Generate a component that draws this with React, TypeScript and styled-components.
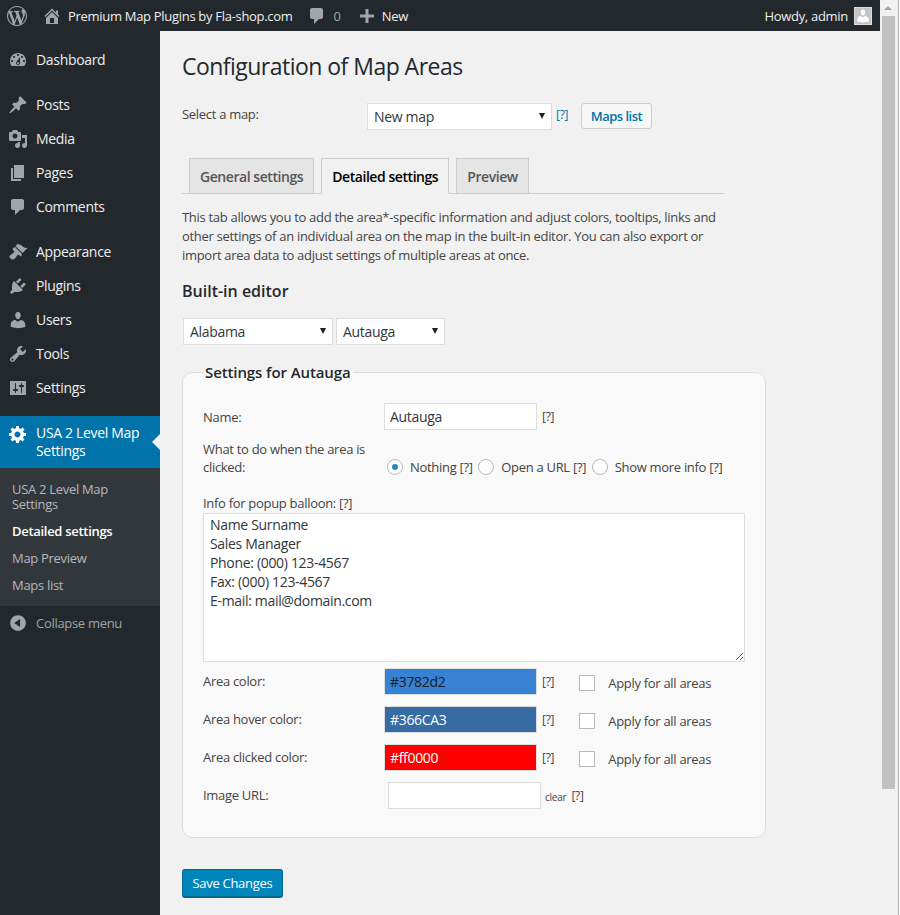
import styled, { createGlobalStyle } from 'styled-components';

const Font = '"Open Sans", "Noto Sans", sans-serif';

const Global = createGlobalStyle`
  html, body {
    margin: 0;
    height: 915px;
    overflow: hidden;
    background: #fff;
  }
  * {
    box-sizing: border-box;
    letter-spacing: -0.023em;
  }
`;

const Icons = {
  wordpress:
    'M20 10c0-5.51-4.49-10-10-10C4.48 0 0 4.49 0 10c0 5.52 4.48 10 10 10 5.51 0 10-4.48 10-10zM7.78 15.37L4.37 6.22c.55-.02 1.17-.08 1.17-.08.5-.06.44-1.13-.06-1.11 0 0-1.45.11-2.37.11-.18 0-.37 0-.58-.01C4.12 2.69 6.87 1.11 10 1.11c2.33 0 4.45.87 6.05 2.34-.68-.11-1.65.39-1.65 1.58 0 .74.45 1.36.9 2.1.35.61.55 1.36.55 2.46 0 1.49-1.4 5-1.4 5l-3.03-8.37c.54-.02.82-.17.82-.17.5-.05.44-1.25-.06-1.22 0 0-1.44.12-2.38.12-.87 0-2.33-.12-2.33-.12-.5-.03-.56 1.2-.06 1.22l.92.08 1.26 3.41zM17.41 10c.24-.64.74-1.87.43-4.25.7 1.29 1.05 2.71 1.05 4.25 0 3.29-1.73 6.24-4.4 7.78.97-2.59 1.94-5.2 2.92-7.78zM6.1 18.09C3.12 16.65 1.11 13.53 1.11 10c0-1.3.23-2.48.72-3.59C3.25 10.3 4.67 14.2 6.1 18.09zm4.03-6.63l2.58 6.98c-.86.29-1.76.45-2.71.45-.79 0-1.57-.11-2.29-.33.81-2.38 1.62-4.74 2.42-7.1z',
  home: 'M16 8.5l1.53 1.53-1.06 1.06L10 4.62l-6.47 6.47-1.06-1.06L10 2.5l4 4v-2h2v4zm-6-2.46l6 5.99V18H4v-5.97zM12 17v-5H8v5h4z',
  comment:
    'M5 2h9c1.1 0 2 .9 2 2v7c0 1.1-.9 2-2 2h-2l-5 5v-5H5c-1.1 0-2-.9-2-2V4c0-1.1.9-2 2-2z',
  plus: 'M17 8.5v3h-5.5V17h-3v-5.5H3v-3h5.5V3h3v5.5z',
  dashboard:
    'M3.76 16h12.48c1.1-1.37 1.76-3.11 1.76-5 0-4.42-3.58-8-8-8s-8 3.58-8 8c0 1.89.66 3.63 1.76 5zM10 4c.55 0 1 .45 1 1s-.45 1-1 1-1-.45-1-1 .45-1 1-1zM6 6c.55 0 1 .45 1 1s-.45 1-1 1-1-.45-1-1 .45-1 1-1zm8 0c.55 0 1 .45 1 1s-.45 1-1 1-1-.45-1-1 .45-1 1-1zm-5.37 5.55L12 7v6c0 1.1-.9 2-2 2s-2-.9-2-2c0-.57.24-1.08.63-1.45zM4 10c.55 0 1 .45 1 1s-.45 1-1 1-1-.45-1-1 .45-1 1-1zm12 0c.55 0 1 .45 1 1s-.45 1-1 1-1-.45-1-1 .45-1 1-1zm-5 3c0-.55-.45-1-1-1s-1 .45-1 1 .45 1 1 1 1-.45 1-1z',
  post: 'M10.44 3.02l1.82-1.82 6.36 6.35-1.83 1.82c-1.05-.68-2.48-.57-3.41.36l-.75.75c-.92.93-1.04 2.35-.35 3.41l-1.83 1.82-2.41-2.41-2.8 2.79c-.42.42-3.38 2.71-3.8 2.29s1.86-3.39 2.28-3.81l2.79-2.79L4.1 9.36l1.83-1.82c1.05.69 2.48.57 3.4-.36l.75-.75c.93-.92 1.05-2.35.36-3.41z',
  media:
    'M13 11V4c0-.55-.45-1-1-1h-1.67L9 1H5L3.67 3H2c-.55 0-1 .45-1 1v7c0 .55.45 1 1 1h10c.55 0 1-.45 1-1zM7 4.5c1.38 0 2.5 1.12 2.5 2.5S8.38 9.5 7 9.5 4.5 8.38 4.5 7 5.62 4.5 7 4.5zM14 6h5v10.5c0 1.38-1.12 2.5-2.5 2.5S14 17.88 14 16.5s1.12-2.5 2.5-2.5c.17 0 .34.02.5.05V9h-3V6zm-4 8.05V13h2v3.5c0 1.38-1.12 2.5-2.5 2.5S7 17.88 7 16.5 8.12 14 9.5 14c.17 0 .34.02.5.05z',
  page: 'M6 15V2h10v13H6zm-1 1h8v2H3V5h2v11z',
  appearance:
    'M14.48 11.06L7.41 3.99l1.5-1.5c.5-.56 2.3-.47 3.51.32 1.21.8 1.43 1.28 2.91 2.1 1.18.64 2.45 1.26 4.45.85zm-.71.71L6.7 4.7 4.93 6.47c-.39.39-.39 1.02 0 1.41l1.06 1.06c.39.39.39 1.03 0 1.42-.6.6-1.43 1.11-2.21 1.69-.35.26-.7.53-1.01.84C1.43 13.23.91 15.01 2.45 16.55s3.32 1.02 4.65-.31c.31-.31.58-.66.84-1.01.58-.78 1.09-1.61 1.69-2.21.39-.39 1.02-.39 1.41 0l1.06 1.06c.39.39 1.02.39 1.41 0z',
  plugins:
    'M13.11 4.36L9.87 7.6 8 5.73l3.24-3.24c.35-.34 1.05-.2 1.56.32.52.51.66 1.21.31 1.55zm-8 1.77l.91-1.12 9.01 9.01-1.19.84c-.71.71-2.63 1.16-3.82 1.16H6.14L4.9 17.26c-.59.59-1.54.59-2.12 0-.59-.58-.59-1.53 0-2.12l1.24-1.24v-3.88c0-1.13.4-3.19 1.09-3.89zm7.26 3.97l3.24-3.24c.34-.35 1.04-.21 1.55.31.52.51.66 1.21.31 1.55l-3.24 3.25z',
  users:
    'M10 9.25c-2.27 0-2.73-3.44-2.73-3.44C7 4.02 7.82 2 9.97 2c2.16 0 2.98 2.02 2.71 3.81 0 0-.41 3.44-2.68 3.44zm0 2.57L12.72 10c2.39 0 4.52 2.33 4.52 4.53v2.49s-3.65 1.13-7.24 1.13c-3.65 0-7.24-1.13-7.24-1.13v-2.49c0-2.25 1.94-4.48 4.47-4.48z',
  tools:
    'M16.68 9.77c-1.34 1.34-3.3 1.67-4.95.99l-5.41 6.52c-.99.99-2.59.99-3.58 0s-.99-2.59 0-3.57l6.52-5.42c-.68-1.65-.35-3.61.99-4.95 1.28-1.28 3.12-1.62 4.72-1.06l-2.89 2.89 2.82 2.82 2.86-2.87c.53 1.58.18 3.39-1.08 4.65zM3.81 16.21c.4.39 1.04.39 1.43 0 .4-.4.4-1.04 0-1.43-.39-.4-1.03-.4-1.43 0-.39.39-.39 1.03 0 1.43z',
  settings:
    'M18 16V4c0-.55-.45-1-1-1H3c-.55 0-1 .45-1 1v12c0 .55.45 1 1 1h14c.55 0 1-.45 1-1zM8 11h1c.55 0 1 .45 1 1s-.45 1-1 1H8v1.5c0 .28-.22.5-.5.5s-.5-.22-.5-.5V13H6c-.55 0-1-.45-1-1s.45-1 1-1h1V5.5c0-.28.22-.5.5-.5s.5.22.5.5V11zm5-2h-1c-.55 0-1-.45-1-1s.45-1 1-1h1V5.5c0-.28.22-.5.5-.5s.5.22.5.5V7h1c.55 0 1 .45 1 1s-.45 1-1 1h-1v5.5c0 .28-.22.5-.5.5s-.5-.22-.5-.5V9z',
  gear: 'M18 12h-2.18c-.17.7-.44 1.35-.81 1.93l1.54 1.54-2.1 2.1-1.54-1.54c-.58.36-1.23.63-1.91.79V19H8v-2.18c-.68-.16-1.33-.43-1.91-.79l-1.54 1.54-2.12-2.12 1.54-1.54c-.36-.58-.63-1.23-.79-1.91H1V9.03h2.17c.16-.7.44-1.35.8-1.94L2.43 5.55l2.1-2.1 1.54 1.54c.58-.37 1.24-.64 1.93-.81V2h3v2.18c.68.16 1.33.43 1.91.79l1.54-1.54 2.12 2.12-1.54 1.54c.36.59.64 1.24.8 1.94H18V12zm-8.5 1.5c1.66 0 3-1.34 3-3s-1.34-3-3-3-3 1.34-3 3 1.34 3 3 3z',
  collapse:
    'M10 2.16c4.33 0 7.84 3.51 7.84 7.84s-3.51 7.84-7.84 7.84S2.16 14.33 2.16 10 5.71 2.16 10 2.16zm2 11.72V6.12L6.18 9.97z',
};

const _Icon = styled.svg<{ $color?: string }>`
  width: 20px;
  height: 20px;
  flex: none;
  fill: ${(p) => p.$color ?? '#a0a5aa'};
`;

const Icon: React.FC<{ d: string; color?: string }> = ({ d, color }) => (
  <_Icon viewBox="0 0 20 20" $color={color}>
    <path d={d} />
  </_Icon>
);

const Page = styled.div`
  width: 900px;
  height: 915px;
  display: flex;
  overflow: hidden;
  font-family: ${Font};
  font-size: 13px;
  color: #444;
`;

const Window = styled.div`
  width: 880px;
  display: flex;
  flex-direction: column;
  background: #f1f1f1;
`;

const Scrollbar = styled.div`
  width: 19px;
  padding: 6px 0 0 2px;
  background: #f1f1f1;
  border-right: 1px solid #b3b3b3;
`;

const ScrollArrow = styled.div`
  width: 0;
  margin: 0 0 6px 2px;
  border-left: 4.5px solid transparent;
  border-right: 4.5px solid transparent;
  border-bottom: 4px solid #a3a3a3;
`;

const ScrollThumb = styled.div`
  width: 13px;
  height: 773px;
  background: #c1c1c1;
`;

const TopBar = styled.div`
  height: 31px;
  flex: none;
  background: #23282d;
  display: flex;
  align-items: center;
  padding: 0 8px 0 7px;
`;

const TopItem = styled.span<{ $muted?: boolean; $gap?: number; $after: number }>`
  display: flex;
  align-items: center;
  color: ${(p) => (p.$muted ? '#a0a5aa' : '#eee')};
  margin-right: ${(p) => p.$after}px;
  gap: ${(p) => p.$gap ?? 0}px;
`;

const Howdy = styled.span`
  margin-left: auto;
  color: #eee;
  display: flex;
  align-items: center;
  gap: 6px;
`;

const Avatar = styled.span`
  width: 18px;
  height: 18px;
  background: #c4c4c4;
  border: 1px solid #ddd;
  display: flex;
  overflow: hidden;
  svg {
    width: 16px;
    height: 16px;
    fill: #fff;
  }
`;

const Body = styled.div`
  flex: 1;
  display: flex;
  min-height: 0;
`;

const Sidebar = styled.nav`
  width: 160px;
  flex: none;
  background: #23282d;
  padding-top: 12px;
  color: #eee;
`;

const MenuItem = styled.div<{ $gap?: boolean }>`
  height: 34px;
  display: flex;
  align-items: center;
  gap: 8px;
  padding-left: 8px;
  font-size: 14px;
  margin-top: ${(p) => (p.$gap ? '11px' : '0')};
`;

const MenuLabel = styled.span`
  margin-top: -2px;
`;

const ActiveItem = styled.div`
  position: relative;
  height: 52px;
  margin-top: 11px;
  background: #0073aa;
  color: #fff;
  display: flex;
  gap: 8px;
  padding: 8px 8px 0 8px;
  font-size: 14px;
  line-height: 18px;

  &::after {
    content: '';
    position: absolute;
    right: 0;
    top: 18px;
    border: 8px solid transparent;
    border-right-color: #f1f1f1;
  }
`;

const SubMenu = styled.div`
  height: 138px;
  background: #32373c;
  padding: 14px 12px 0;
  color: #b4b9be;
`;

const SubItem = styled.div<{ $current?: boolean }>`
  line-height: 15px;
  padding-bottom: 12px;
  color: ${(p) => (p.$current ? '#fff' : '#b4b9be')};
  font-weight: ${(p) => (p.$current ? 600 : 400)};
`;

const CollapseItem = styled.div`
  height: 34px;
  display: flex;
  align-items: center;
  gap: 8px;
  padding-left: 8px;
  color: #a0a5aa;
`;

const Content = styled.main`
  flex: 1;
  padding: 21px 0 0 22px;
`;

const Title = styled.h1`
  margin: 0 0 22px;
  font-size: 23px;
  font-weight: 400;
  line-height: 29px;
  color: #23282d;
`;

const MapRow = styled.div`
  display: flex;
  align-items: flex-start;
  margin-bottom: 28px;
`;

const MapLabel = styled.span`
  width: 185px;
  line-height: 23px;
`;

const Help = styled.span`
  color: #0073aa;
  font-size: 12px;
  margin-left: 4px;
  line-height: 23px;
`;

const GreyHelp = styled.span`
  color: #444;
  font-size: 12px;
  margin-left: 5px;
`;

const SelectWrap = styled.span<{ $width: number }>`
  position: relative;
  display: inline-block;
  width: ${(p) => p.$width}px;
  height: 27px;

  &::after {
    content: '';
    position: absolute;
    right: 7px;
    top: 10px;
    border-left: 3.5px solid transparent;
    border-right: 3.5px solid transparent;
    border-top: 6px solid #222;
    pointer-events: none;
  }
`;

const Select = styled.select`
  appearance: none;
  width: 100%;
  height: 27px;
  border: 1px solid #ddd;
  background: #fff;
  padding: 0 6px;
  margin: 0;
  border-radius: 0;
  font-family: ${Font};
  font-size: 14px;
  color: #32373c;
`;

const SecondaryButton = styled.button`
  height: 26px;
  margin-left: 13px;
  padding: 0 8.5px;
  border: 1px solid #ccc;
  border-radius: 3px;
  background: #f7f7f7;
  color: #0073aa;
  font-family: ${Font};
  font-size: 13px;
  font-weight: 600;
  letter-spacing: -0.04em;
`;

const Tabs = styled.div`
  width: 542px;
  height: 36px;
  display: flex;
  gap: 7px;
  padding-left: 7px;
  border-bottom: 1px solid #ccc;
`;

const Tab = styled.div<{ $active?: boolean }>`
  height: 36px;
  padding: 0 10px;
  display: flex;
  align-items: center;
  border: 1px solid #ccc;
  border-bottom-color: ${(p) => (p.$active ? '#f1f1f1' : '#ccc')};
  background: ${(p) => (p.$active ? '#f1f1f1' : '#e5e5e5')};
  color: ${(p) => (p.$active ? '#000' : '#555')};
  font-size: 14px;
  font-weight: 600;
  letter-spacing: -0.44px;
`;

const Intro = styled.p`
  width: 545px;
  margin: 14px 0 16px;
  line-height: 19px;
`;

const Heading = styled.h2`
  margin: 0 0 17px;
  font-size: 16px;
  line-height: 20px;
  font-weight: 600;
  letter-spacing: 0;
  color: #23282d;
`;

const AreaSelects = styled.div`
  display: flex;
  gap: 3px;
  padding-left: 1px;
  margin-bottom: 18px;
`;

const Panel = styled.fieldset`
  width: 584px;
  height: 475px;
  margin: 0 0 31px;
  padding: 21px 20px 0;
  border: 1px solid #ddd;
  border-radius: 10px;
  background: #f9f9f9;
`;

const Legend = styled.legend`
  margin-left: 0;
  padding: 0 2px;
  font-size: 15px;
  line-height: 19px;
  font-weight: 600;
  letter-spacing: -0.1px;
  color: #23282d;
`;

const Row = styled.div<{ $height: number }>`
  display: flex;
  align-items: center;
  height: ${(p) => p.$height}px;
`;

const RowLabel = styled.span`
  width: 181px;
  flex: none;
  line-height: 18px;
`;

const TextInput = styled.input<{ $bg?: string; $fg?: string; $shift?: number }>`
  width: 153px;
  height: 27px;
  flex: none;
  margin: 0 0 0 ${(p) => p.$shift ?? 0}px;
  padding: 0 5px;
  border: 1px solid #ddd;
  border-radius: 0;
  background: ${(p) => p.$bg ?? '#fff'};
  color: ${(p) => p.$fg ?? '#32373c'};
  font-family: ${Font};
  font-size: 14px;
`;

const RadioRow = styled.div`
  display: flex;
  align-items: flex-end;
  margin-top: 10px;
`;

const ClickLabel = styled.span`
  width: 181px;
  line-height: 18px;
`;

const RadioGroup = styled.div`
  display: flex;
  align-items: center;
  height: 18px;
  padding-left: 3px;
`;

const Radio = styled.span<{ $checked?: boolean }>`
  width: 16px;
  height: 16px;
  flex: none;
  border: 1px solid #b4b9be;
  border-radius: 50%;
  background: #fff;
  display: flex;
  align-items: center;
  justify-content: center;
  margin-right: 7px;

  &::before {
    content: '';
    display: ${(p) => (p.$checked ? 'block' : 'none')};
    width: 6px;
    height: 6px;
    border-radius: 50%;
    background: #1e8cbe;
  }
`;

const RadioText = styled.span`
  margin-right: 5.5px;
`;

const InfoLabel = styled.div`
  margin-top: 18px;
  line-height: 18px;
  margin-bottom: 1px;
`;

const Area = styled.textarea`
  display: block;
  width: 542px;
  height: 149px;
  margin: 0;
  padding: 1px 6px;
  border: 1px solid #ddd;
  border-radius: 0;
  background: #fff;
  color: #32373c;
  font-family: ${Font};
  font-size: 14px;
  line-height: 19px;
`;

const Check = styled.span`
  width: 16px;
  height: 16px;
  flex: none;
  margin: 4px 13px 0 25px;
  border: 1px solid #b4b9be;
  background: #fff;
`;

const ApplyText = styled.span`
  margin-top: 4px;
`;

const ClearText = styled.span`
  font-size: 10px;
  margin: 3px 0 0 4px;
`;

const SaveButton = styled.button`
  display: block;
  height: 29px;
  padding: 0 9.5px;
  border: 1px solid #006799;
  border-bottom-width: 2px;
  border-radius: 3px;
  background: #0085ba;
  color: #fff;
  font-family: ${Font};
  font-size: 13px;
`;

const menuTop = [{ d: Icons.dashboard, label: 'Dashboard' }];
const menuContent = [
  { d: Icons.post, label: 'Posts' },
  { d: Icons.media, label: 'Media' },
  { d: Icons.page, label: 'Pages' },
  { d: Icons.comment, label: 'Comments' },
];
const menuAdmin = [
  { d: Icons.appearance, label: 'Appearance' },
  { d: Icons.plugins, label: 'Plugins' },
  { d: Icons.users, label: 'Users' },
  { d: Icons.tools, label: 'Tools' },
  { d: Icons.settings, label: 'Settings' },
];

const colorRows = [
  { label: 'Area color:', value: '#3782d2', bg: '#3782d2', fg: '#14202e' },
  { label: 'Area hover color:', value: '#366CA3', bg: '#366ca3', fg: '#fff' },
  { label: 'Area clicked color:', value: '#ff0000', bg: '#ff0000', fg: '#fff' },
];

const renderGroup = (items: { d: string; label: string }[]) =>
  items.map((item, i) => (
    <MenuItem key={item.label} $gap={i === 0}>
      <Icon d={item.d} />
      <MenuLabel>{item.label}</MenuLabel>
    </MenuItem>
  ));

export default function App() {
  return (
    <Page>
      <Global />
      <Window>
        <TopBar>
          <TopItem $after={15}>
            <Icon d={Icons.wordpress} />
          </TopItem>
          <TopItem $after={14} $gap={6}>
            <Icon d={Icons.home} />
            Premium Map Plugins by Fla-shop.com
          </TopItem>
          <TopItem $muted $after={16} $gap={7}>
            <Icon d={Icons.comment} />0
          </TopItem>
          <TopItem $after={0} $gap={5}>
            <Icon d={Icons.plus} />
            New
          </TopItem>
          <Howdy>
            Howdy, admin
            <Avatar>
              <svg viewBox="0 0 20 20">
                <path d={Icons.users} />
              </svg>
            </Avatar>
          </Howdy>
        </TopBar>
        <Body>
          <Sidebar>
            {menuTop.map((item) => (
              <MenuItem key={item.label}>
                <Icon d={item.d} />
                <MenuLabel>{item.label}</MenuLabel>
              </MenuItem>
            ))}
            {renderGroup(menuContent)}
            {renderGroup(menuAdmin)}
            <ActiveItem>
              <Icon d={Icons.gear} color="#fff" />
              <span>USA 2 Level Map Settings</span>
            </ActiveItem>
            <SubMenu>
              <SubItem>USA 2 Level Map Settings</SubItem>
              <SubItem $current>Detailed settings</SubItem>
              <SubItem>Map Preview</SubItem>
              <SubItem>Maps list</SubItem>
            </SubMenu>
            <CollapseItem>
              <Icon d={Icons.collapse} />
              Collapse menu
            </CollapseItem>
          </Sidebar>
          <Content>
            <Title>Configuration of Map Areas</Title>
            <MapRow>
              <MapLabel>Select a map:</MapLabel>
              <SelectWrap $width={185}>
                <Select defaultValue="New map">
                  <option>New map</option>
                </Select>
              </SelectWrap>
              <Help>[?]</Help>
              <SecondaryButton>Maps list</SecondaryButton>
            </MapRow>
            <Tabs>
              <Tab>General settings</Tab>
              <Tab $active>Detailed settings</Tab>
              <Tab>Preview</Tab>
            </Tabs>
            <Intro>
              This tab allows you to add the area*-specific information and adjust colors, tooltips, links and
              other settings of an individual area on the map in the built-in editor. You can also export or
              import area data to adjust settings of multiple areas at once.
            </Intro>
            <Heading>Built-in editor</Heading>
            <AreaSelects>
              <SelectWrap $width={150}>
                <Select defaultValue="Alabama">
                  <option>Alabama</option>
                </Select>
              </SelectWrap>
              <SelectWrap $width={109}>
                <Select defaultValue="Autauga">
                  <option>Autauga</option>
                </Select>
              </SelectWrap>
            </AreaSelects>
            <Panel>
              <Legend>Settings for Autauga</Legend>
              <Row $height={27}>
                <RowLabel>Name:</RowLabel>
                <TextInput defaultValue="Autauga" />
                <GreyHelp>[?]</GreyHelp>
              </Row>
              <RadioRow>
                <ClickLabel>
                  What to do when the area is
                  <br />
                  clicked:
                </ClickLabel>
                <RadioGroup>
                  <Radio $checked />
                  <RadioText>Nothing [?]</RadioText>
                  <Radio />
                  <RadioText>Open a URL [?]</RadioText>
                  <Radio />
                  <RadioText>Show more info [?]</RadioText>
                </RadioGroup>
              </RadioRow>
              <InfoLabel>Info for popup balloon: [?]</InfoLabel>
              <Area
                readOnly
                defaultValue={
                  'Name Surname\nSales Manager\nPhone: (000) 123-4567\nFax: (000) 123-4567\nE-mail: mail@domain.com'
                }
              />
              {colorRows.map((row) => (
                <Row key={row.label} $height={38}>
                  <RowLabel>{row.label}</RowLabel>
                  <TextInput defaultValue={row.value} $bg={row.bg} $fg={row.fg} />
                  <GreyHelp>[?]</GreyHelp>
                  <Check />
                  <ApplyText>Apply for all areas</ApplyText>
                </Row>
              ))}
              <Row $height={38}>
                <RowLabel>Image URL:</RowLabel>
                <TextInput $shift={4} />
                <ClearText>clear</ClearText>
                <GreyHelp>[?]</GreyHelp>
              </Row>
            </Panel>
            <SaveButton>Save Changes</SaveButton>
          </Content>
        </Body>
      </Window>
      <Scrollbar>
        <ScrollArrow />
        <ScrollThumb />
      </Scrollbar>
    </Page>
  );
}
